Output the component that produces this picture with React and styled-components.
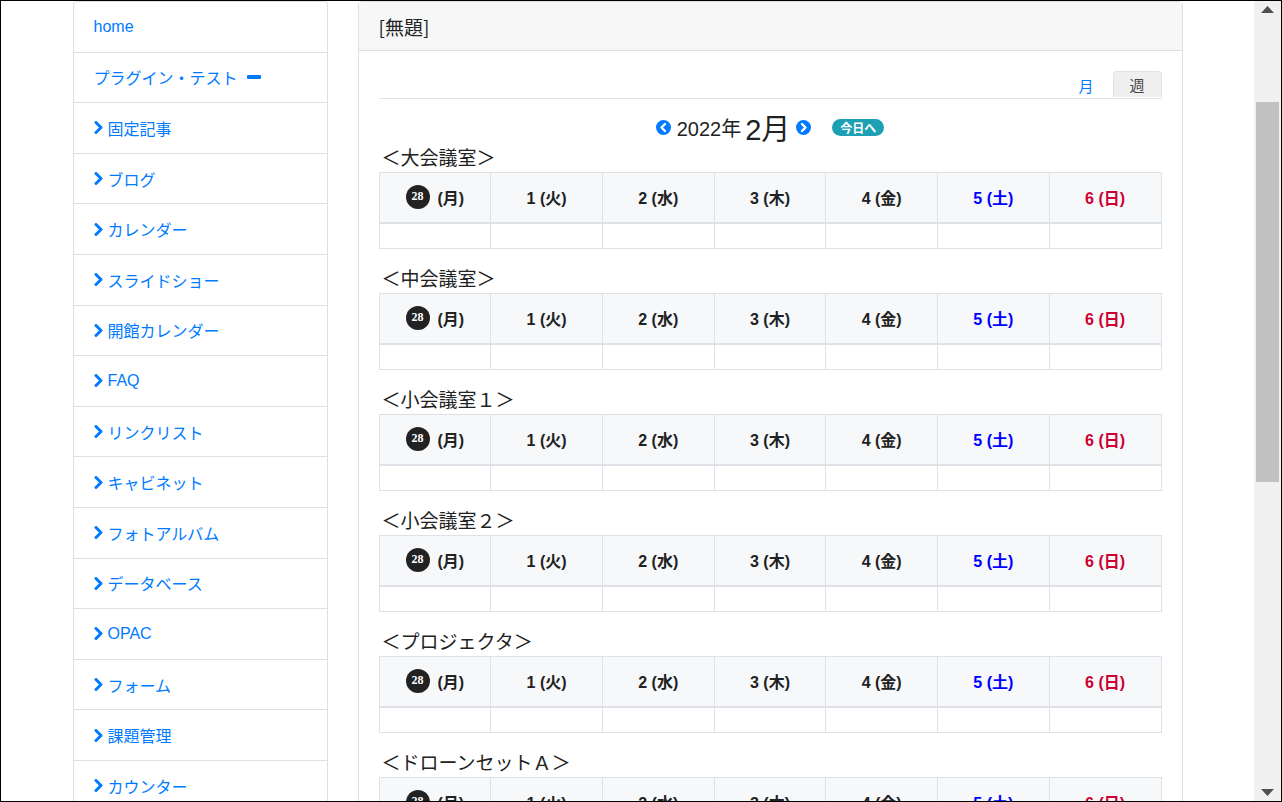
import React from "react";
import styled, { createGlobalStyle, css } from "styled-components";

const GlobalStyle = createGlobalStyle`
  html, body {
    margin: 0;
    padding: 0;
    background: #fff;
    font-family: "Liberation Sans", "Noto Sans CJK JP", sans-serif;
    color: #212529;
  }
`;

const LINK = "#007bff";
const BORDER = "#dee2e6";

const Frame = styled.div`
  width: 1282px;
  height: 802px;
  box-sizing: border-box;
  border: 1px solid #000;
  display: flex;
  overflow: hidden;
  background: #fff;
`;

const Viewport = styled.div`
  flex: 1;
  overflow: hidden;
`;

const Container = styled.div`
  width: 1110px;
  margin: 0 auto;
  display: flex;
  gap: 30px;
  align-items: flex-start;
`;

const SideMenu = styled.ul`
  width: 255px;
  box-sizing: border-box;
  flex: none;
  margin: 0;
  padding: 0;
  list-style: none;
  border: 1px solid #dfdfdf;
  border-bottom: none;
  border-radius: 4px 4px 0 0;
`;

const MenuItem = styled.li`
  height: 50.6px;
  box-sizing: border-box;
  display: flex;
  align-items: center;
  gap: 5px;
  padding: 0 20px;
  font-size: 16px;
  color: ${LINK};
  border-bottom: 1px solid #dfdfdf;
`;

const Minus = styled.span`
  display: inline-block;
  width: 14px;
  height: 4px;
  border-radius: 1px;
  background: ${LINK};
  margin-left: 4px;
`;

const Card = styled.div`
  width: 825px;
  box-sizing: border-box;
  flex: none;
  border: 1px solid #dfdfdf;
  border-radius: 4px;
`;

const CardHeader = styled.div`
  height: 48px;
  display: flex;
  align-items: center;
  padding: 0 20px;
  background: #f7f7f7;
  border-bottom: 1px solid #dfdfdf;
  font-size: 19px;
  font-family: "Noto Sans CJK JP", sans-serif;
  color: #222;
`;

const CardBody = styled.div`
  padding: 20px 20px 0;
`;

const Tabs = styled.div`
  display: flex;
  justify-content: flex-end;
  border-bottom: 1px solid ${BORDER};
`;

const Tab = styled.div`
  height: 26px;
  display: flex;
  align-items: center;
  justify-content: center;
  padding: 0 18px;
  font-size: 15px;
  font-family: "Noto Sans CJK JP", sans-serif;
  color: ${LINK};
  border: 1px solid transparent;
  border-bottom: none;
  border-radius: 4px 4px 0 0;
  ${(p) =>
    p.active &&
    css`
      width: 49px;
      padding: 0;
      box-sizing: border-box;
      background: #efefef;
      color: #444;
      border-color: ${BORDER};
    `}
`;

const CalHeader = styled.div`
  height: 34px;
  margin-top: 11px;
  display: flex;
  align-items: center;
  justify-content: center;
`;

const Year = styled.span`
  font-size: 20px;
  color: #222;
  margin: 0 4px 0 6px;
`;

const Month = styled.span`
  font-size: 29px;
  color: #222;
  margin-right: 6px;
`;

const TodayBadge = styled.span`
  margin-left: 21px;
  height: 17px;
  padding: 0 8px;
  border-radius: 9px;
  background: #1ca0b4;
  color: #fff;
  font-size: 12px;
  font-weight: bold;
  display: flex;
  align-items: center;
`;

const Section = styled.div`
  margin-bottom: 16px;
`;

const RoomTitle = styled.div`
  height: 28px;
  line-height: 26px;
  padding-left: 3px;
  font-size: 19px;
  font-family: "Noto Sans CJK JP", sans-serif;
  color: #222;
`;

const Table = styled.table`
  width: 100%;
  table-layout: fixed;
  border-collapse: collapse;
`;

const Th = styled.th`
  height: 49px;
  padding: 0;
  background: #f7f8fa;
  border: 1px solid ${BORDER};
  border-bottom-width: 2px;
  font-size: 16px;
  font-weight: bold;
  color: ${(p) => p.color || "#222"};
`;

const Td = styled.td`
  height: 24px;
  padding: 0;
  border: 1px solid ${BORDER};
`;

const DayLabel = styled.span`
  display: inline-flex;
  align-items: center;
  gap: 8px;
  position: relative;
  top: -1px;
`;

const TodayDot = styled.span`
  width: 24px;
  height: 24px;
  border-radius: 50%;
  background: #222;
  color: #fff;
  font-size: 12px;
  font-weight: bold;
  display: inline-flex;
  align-items: center;
  justify-content: center;
  font-family: "Liberation Serif", serif;
`;

const ScrollTrack = styled.div`
  width: 27px;
  flex: none;
  background: #f0f0f0;
  display: flex;
  flex-direction: column;
  align-items: center;
`;

const ArrowBox = styled.div`
  height: 17px;
  width: 100%;
  display: flex;
  align-items: center;
  justify-content: center;
`;

const Thumb = styled.div`
  width: 23px;
  height: 380px;
  background: #c1c1c1;
  margin-top: 84px;
  flex: none;
`;

const Spacer = styled.div`
  flex: 1;
`;

function Chevron() {
  return (
    <svg width="9" height="13" viewBox="0 0 9 13">
      <polyline points="2,1.5 7,6.5 2,11.5" fill="none" stroke={LINK} strokeWidth="3" strokeLinejoin="round" strokeLinecap="round" />
    </svg>
  );
}

function CircleChevron({ dir }) {
  const pts = dir === "left" ? "9,4 5.5,7.5 9,11" : "6,4 9.5,7.5 6,11";
  return (
    <svg width="15" height="15" viewBox="0 0 15 15">
      <circle cx="7.5" cy="7.5" r="7.5" fill={LINK} />
      <polyline points={pts} fill="none" stroke="#fff" strokeWidth="2.4" strokeLinecap="round" strokeLinejoin="round" />
    </svg>
  );
}

const menu = [
  "固定記事", "ブログ", "カレンダー", "スライドショー", "開館カレンダー", "FAQ",
  "リンクリスト", "キャビネット", "フォトアルバム", "データベース", "OPAC",
  "フォーム", "課題管理", "カウンター",
];

const days = [
  { label: "1 (火)" },
  { label: "2 (水)" },
  { label: "3 (木)" },
  { label: "4 (金)" },
  { label: "5 (土)", color: "#0000ff" },
  { label: "6 (日)", color: "#cc0033" },
];

const rooms = [
  "＜大会議室＞",
  "＜中会議室＞",
  "＜小会議室１＞",
  "＜小会議室２＞",
  "＜プロジェクタ＞",
  "＜ドローンセットＡ＞",
];

function RoomTable({ name }) {
  return (
    <Section>
      <RoomTitle>{name}</RoomTitle>
      <Table>
        <thead>
          <tr>
            <Th>
              <DayLabel>
                <TodayDot>28</TodayDot>(月)
              </DayLabel>
            </Th>
            {days.map((d) => (
              <Th key={d.label} color={d.color}>
                <DayLabel>{d.label}</DayLabel>
              </Th>
            ))}
          </tr>
        </thead>
        <tbody>
          <tr>
            {Array.from({ length: 7 }).map((_, i) => (
              <Td key={i} />
            ))}
          </tr>
        </tbody>
      </Table>
    </Section>
  );
}

export default function App() {
  return (
    <>
      <GlobalStyle />
      <Frame>
        <Viewport>
          <Container>
            <SideMenu>
              <MenuItem>home</MenuItem>
              <MenuItem>
                プラグイン・テスト<Minus />
              </MenuItem>
              {menu.map((m) => (
                <MenuItem key={m}>
                  <Chevron />
                  {m}
                </MenuItem>
              ))}
            </SideMenu>
            <Card>
              <CardHeader>[無題]</CardHeader>
              <CardBody>
                <Tabs>
                  <Tab>月</Tab>
                  <Tab active>週</Tab>
                </Tabs>
                <CalHeader>
                  <CircleChevron dir="left" />
                  <Year>2022年</Year>
                  <Month>2月</Month>
                  <CircleChevron dir="right" />
                  <TodayBadge>今日へ</TodayBadge>
                </CalHeader>
                {rooms.map((r) => (
                  <RoomTable key={r} name={r} />
                ))}
              </CardBody>
            </Card>
          </Container>
        </Viewport>
        <ScrollTrack>
          <ArrowBox>
            <svg width="13" height="7" viewBox="0 0 13 7">
              <polygon points="6.5,0 13,7 0,7" fill="#505050" />
            </svg>
          </ArrowBox>
          <Thumb />
          <Spacer />
          <ArrowBox>
            <svg width="13" height="7" viewBox="0 0 13 7">
              <polygon points="0,0 13,0 6.5,7" fill="#505050" />
            </svg>
          </ArrowBox>
        </ScrollTrack>
      </Frame>
    </>
  );
}
